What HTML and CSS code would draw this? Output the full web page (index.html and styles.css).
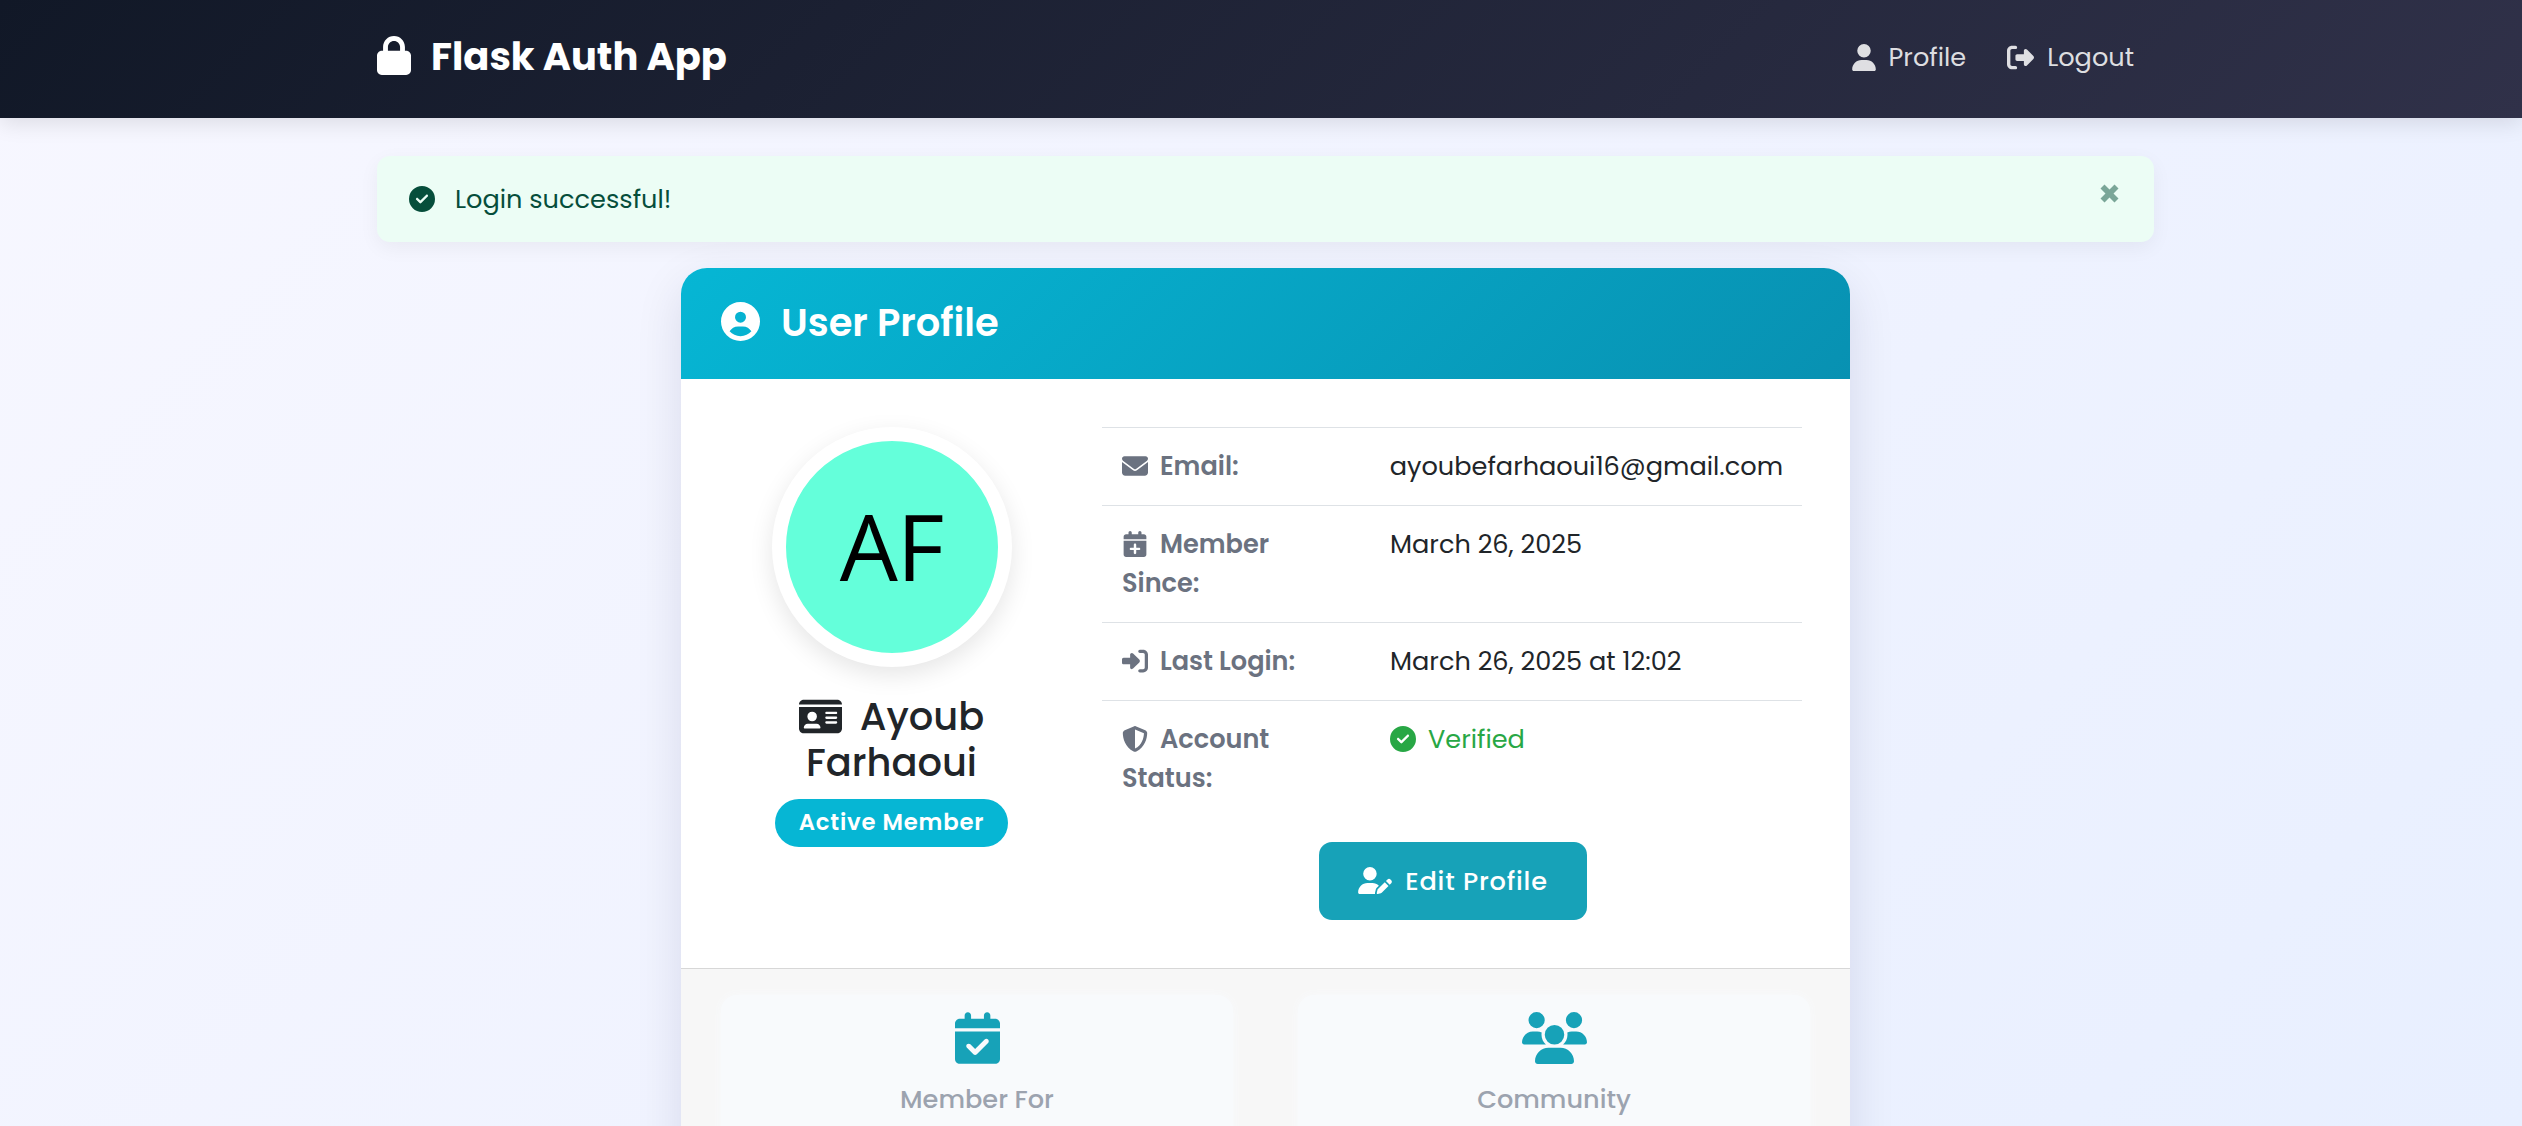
FILE: index.html
```html
<!DOCTYPE html>
<html lang="en">
<head>
<meta charset="utf-8">
<title>Flask Auth App</title>
<link rel="stylesheet" href="styles.css">
</head>
<body>
<header class="navbar">
  <div class="container navbar-inner">
    <a class="brand"><svg class="icon brand-icon" viewBox="0 0 448 512"><path d="M144 144v48H304V144c0-44.200-35.800-80-80-80s-80 35.800-80 80zM80 192V144C80 64.500 144.500 0 224 0s144 64.500 144 144v48h16c35.300 0 64 28.700 64 64V448c0 35.300-28.700 64-64 64H64c-35.300 0-64-28.700-64-64V256c0-35.300 28.700-64 64-64H80z"/></svg><span>Flask Auth App</span></a>
    <nav class="nav">
      <a class="nav-link"><svg class="icon nav-user" viewBox="0 0 448 512"><path d="M224 256A128 128 0 1 0 224 0a128 128 0 1 0 0 256zm-45.700 48C79.800 304 0 383.800 0 482.300C0 498.700 13.300 512 29.700 512H418.300c16.400 0 29.700-13.300 29.700-29.700C448 383.800 368.200 304 269.700 304H178.300z"/></svg><span>Profile</span></a>
      <a class="nav-link"><svg class="icon nav-out" viewBox="0 0 512 512"><path d="M377.900 105.900L500.700 228.700c7.200 7.200 11.300 17.100 11.300 27.300s-4.100 20.100-11.300 27.300L377.900 406.100c-6.400 6.400-15 9.900-24 9.900c-18.700 0-33.900-15.200-33.900-33.900l0-62.100-128 0c-17.700 0-32-14.300-32-32l0-64c0-17.700 14.300-32 32-32l128 0 0-62.100c0-18.700 15.200-33.900 33.900-33.900c9 0 17.600 3.600 24 9.900zM160 96L96 96c-17.700 0-32 14.300-32 32l0 256c0 17.700 14.300 32 32 32l64 0c17.700 0 32 14.300 32 32s-14.300 32-32 32l-64 0c-53 0-96-43-96-96L0 128C0 75 43 32 96 32l64 0c17.700 0 32 14.300 32 32s-14.300 32-32 32z"/></svg><span>Logout</span></a>
    </nav>
  </div>
</header>
<main class="container">
  <div class="alert">
    <svg class="icon alert-icon" viewBox="0 0 512 512"><path d="M256 512A256 256 0 1 0 256 0a256 256 0 1 0 0 512zM369 209L241 337c-9.400 9.400-24.600 9.400-33.900 0l-64-64c-9.400-9.400-9.400-24.600 0-33.900s24.600-9.400 33.900 0l47 47L335 175c9.400-9.400 24.600-9.400 33.900 0s9.400 24.600 0 33.900z"/></svg>
    <span>Login successful!</span>
    <svg class="alert-close" viewBox="0 0 19 19"><path d="M4.500 .5L9.500 5.500 14.500 .5 18.500 4.500 13.500 9.500 18.500 14.500 14.500 18.500 9.500 13.500 4.500 18.500 .5 14.500 5.500 9.500 .5 4.500z"/></svg>
  </div>
  <section class="card">
    <div class="card-header">
      <svg class="icon header-icon" viewBox="0 0 512 512"><path fill-rule="evenodd" d="M399 384.200C376.900 345.800 335.400 320 288 320H224c-47.400 0-88.900 25.800-111 64.200c35.200 39.200 86.200 63.800 143 63.800s107.800-24.700 143-63.800zM0 256a256 256 0 1 1 512 0A256 256 0 1 1 0 256zm256 16a72 72 0 1 0 0-144 72 72 0 1 0 0 144z"/></svg>
      <h1 class="header-title">User Profile</h1>
    </div>
    <div class="card-body">
      <div class="identity">
        <div class="avatar"><span class="avatar-text">AF</span></div>
        <h2 class="name"><span class="name-line"><svg class="icon name-icon" viewBox="0 0 576 512"><path fill-rule="evenodd" d="M0 96l576 0c0-35.300-28.700-64-64-64H64C28.700 32 0 60.700 0 96zm0 32V416c0 35.300 28.700 64 64 64H512c35.300 0 64-28.700 64-64V128H0zM64 405.300c0-29.500 23.900-53.300 53.300-53.300H234.700c29.500 0 53.300 23.900 53.300 53.300c0 5.900-4.800 10.700-10.700 10.700H74.700c-5.900 0-10.700-4.800-10.700-10.700zM176 192a64 64 0 1 1 0 128 64 64 0 1 1 0-128zm176 16c0-8.800 7.200-16 16-16H496c8.800 0 16 7.200 16 16s-7.200 16-16 16H368c-8.800 0-16-7.200-16-16zm0 64c0-8.800 7.200-16 16-16H496c8.800 0 16 7.200 16 16s-7.200 16-16 16H368c-8.800 0-16-7.200-16-16zm0 64c0-8.800 7.200-16 16-16H496c8.800 0 16 7.200 16 16s-7.200 16-16 16H368c-8.800 0-16-7.200-16-16z"/></svg><span>Ayoub</span></span><span>Farhaoui</span></h2>
        <span class="badge">Active Member</span>
      </div>
      <div class="details">
        <dl class="table">
          <div class="row">
            <dt><svg class="icon row-icon" viewBox="0 0 512 512"><path d="M48 64C21.500 64 0 85.500 0 112c0 15.100 7.100 29.300 19.200 38.400L236.800 313.600c11.400 8.500 27 8.500 38.400 0L492.800 150.400c12.100-9.100 19.200-23.300 19.200-38.400c0-26.500-21.500-48-48-48H48zM0 176V384c0 35.300 28.700 64 64 64H448c35.300 0 64-28.700 64-64V176L294.400 339.200c-22.800 17.100-54 17.100-76.800 0L0 176z"/></svg><span>Email:</span></dt>
            <dd>ayoubefarhaoui16@gmail.com</dd>
          </div>
          <div class="row row-tall">
            <dt><svg class="icon row-icon" viewBox="0 0 512 512"><path transform="translate(32 0)" fill-rule="evenodd" d="M96 32V64H48C21.500 64 0 85.500 0 112v48H448V112c0-26.500-21.500-48-48-48H352V32c0-17.700-14.300-32-32-32s-32 14.300-32 32V64H160V32c0-17.700-14.300-32-32-32S96 14.300 96 32zM448 192H0V464c0 26.500 21.500 48 48 48H400c26.500 0 48-21.500 48-48V192zM224 248c13.300 0 24 10.700 24 24v56h56c13.300 0 24 10.700 24 24s-10.700 24-24 24H248v56c0 13.300-10.700 24-24 24s-24-10.700-24-24V376H144c-13.300 0-24-10.700-24-24s10.700-24 24-24h56V272c0-13.300 10.700-24 24-24z"/></svg><span>Member</span><br><span>Since:</span></dt>
            <dd>March 26, 2025</dd>
          </div>
          <div class="row">
            <dt><svg class="icon row-icon" viewBox="0 0 512 512"><path d="M217.900 105.900L340.700 228.700c7.200 7.200 11.300 17.100 11.300 27.300s-4.100 20.100-11.300 27.300L217.900 406.100c-6.400 6.400-15 9.900-24 9.900c-18.700 0-33.900-15.200-33.900-33.900l0-62.100L32 320c-17.700 0-32-14.300-32-32l0-64c0-17.700 14.300-32 32-32l128 0 0-62.100c0-18.700 15.200-33.900 33.900-33.900c9 0 17.600 3.600 24 9.900zM352 416l64 0c17.700 0 32-14.300 32-32l0-256c0-17.700-14.300-32-32-32l-64 0c-17.700 0-32-14.300-32-32s14.300-32 32-32l64 0c53 0 96 43 96 96l0 256c0 53-43 96-96 96l-64 0c-17.700 0-32-14.300-32-32s14.300-32 32-32z"/></svg><span>Last Login:</span></dt>
            <dd>March 26, 2025 at 12:02</dd>
          </div>
          <div class="row row-tall">
            <dt><svg class="icon row-icon" viewBox="0 0 512 512"><path d="M256 0c4.600 0 9.200 1 13.400 2.900L457.700 82.800c22 9.300 38.400 31 38.300 57.200c-.5 99.200-41.300 280.700-213.600 363.200c-16.700 8-36.100 8-52.800 0C57.300 420.700 16.500 239.200 16 140c-.1-26.200 16.300-47.900 38.300-57.200L242.700 2.900C246.800 1 251.400 0 256 0zm0 66.800V444.800C394 378 431.100 230.100 432 141.400L256 66.800z"/></svg><span>Account</span><br><span>Status:</span></dt>
            <dd class="verified"><svg class="icon row-icon" viewBox="0 0 512 512"><path d="M256 512A256 256 0 1 0 256 0a256 256 0 1 0 0 512zM369 209L241 337c-9.400 9.400-24.600 9.400-33.900 0l-64-64c-9.400-9.400-9.400-24.600 0-33.900s24.600-9.400 33.900 0l47 47L335 175c9.400-9.400 24.600-9.400 33.900 0s9.400 24.600 0 33.900z"/></svg><span>Verified</span></dd>
          </div>
        </dl>
        <a class="button"><svg class="icon button-icon" viewBox="0 0 640 512"><path d="M224 256A128 128 0 1 0 224 0a128 128 0 1 0 0 256zm-45.700 48C79.800 304 0 383.800 0 482.300C0 498.700 13.300 512 29.700 512H322.800c-3.100-8.800-3.700-18.400-1.400-27.800l15-60.100c2.800-11.300 8.600-21.500 16.800-29.700l40.300-40.300c-32.100-31-75.700-50.100-123.900-50.100H178.300zm435.500-68.300c-15.600-15.600-40.900-15.600-56.600 0l-29.400 29.400 71 71 29.400-29.400c15.600-15.600 15.600-40.900 0-56.600l-14.400-14.400zM375.900 417c-4.100 4.100-7 9.200-8.400 14.900l-15 60.100c-1.400 5.500 .2 11.200 4.200 15.200s9.700 5.600 15.200 4.200l60.100-15c5.600-1.400 10.800-4.300 14.900-8.400L576.100 358.700l-71-71L375.900 417z"/></svg><span>Edit Profile</span></a>
      </div>
    </div>
    <div class="card-footer">
      <div class="stat">
        <svg class="icon stat-icon stat-calendar" viewBox="0 0 448 512"><path fill-rule="evenodd" d="M128 0c17.700 0 32 14.300 32 32V64H288V32c0-17.700 14.300-32 32-32s32 14.300 32 32V64h48c26.500 0 48 21.500 48 48v48H0V112C0 85.500 21.500 64 48 64H96V32c0-17.700 14.300-32 32-32zM0 192H448V464c0 26.500-21.500 48-48 48H48c-26.500 0-48-21.500-48-48V192zM329 305c9.400-9.400 9.400-24.600 0-33.900s-24.600-9.400-33.900 0l-95 95-47-47c-9.400-9.400-24.600-9.400-33.900 0s-9.400 24.600 0 33.900l64 64c9.400 9.400 24.600 9.400 33.900 0L329 305z"/></svg>
        <span>Member For</span>
      </div>
      <div class="stat">
        <svg class="icon stat-icon stat-people" viewBox="0 0 640 512"><path d="M144 0a80 80 0 1 1 0 160A80 80 0 1 1 144 0zM512 0a80 80 0 1 1 0 160A80 80 0 1 1 512 0zM0 298.700C0 239.800 47.800 192 106.700 192h42.700c15.900 0 31 3.500 44.600 9.700c-1.300 7.200-1.900 14.700-1.900 22.300c0 38.200 16.800 72.500 43.300 96c-.2 0-.4 0-.7 0H21.300C9.600 320 0 310.400 0 298.700zM405.300 320c-.2 0-.4 0-.7 0c26.600-23.500 43.300-57.800 43.300-96c0-7.600-.7-15-1.900-22.300c13.600-6.300 28.700-9.700 44.600-9.700h42.700C592.200 192 640 239.800 640 298.700c0 11.800-9.600 21.300-21.300 21.300H405.300zM224 224a96 96 0 1 1 192 0 96 96 0 1 1 -192 0zM128 485.300C128 411.700 187.700 352 261.300 352H378.700C452.300 352 512 411.700 512 485.300c0 14.700-11.900 26.700-26.700 26.700H154.700c-14.700 0-26.700-11.900-26.700-26.700z"/></svg>
        <span>Community</span>
      </div>
    </div>
  </section>
</main>
</body>
</html>
```
FILE: styles.css
```css
* { box-sizing: border-box; }
body { margin: 0; height: 1126px; overflow: hidden; font: 25.6px/39px Poppins, Inter, sans-serif; color: #212529; background: linear-gradient(135deg, #f7f7ff 0%, #f0f3ff 50%, #e8efff 100%); }
span, dd, a { white-space: nowrap; }
h1, h2, dl, dd { margin: 0; font-weight: inherit; }
.icon { fill: currentColor; flex: none; }
.container { width: 1777px; margin-left: 377px; }
.navbar { height: 118px; background: linear-gradient(135deg, #111827, #303149); box-shadow: 0 6px 20px rgba(0,0,0,.1); color: #fff; position: relative; }
.navbar-inner { height: 118px; display: flex; justify-content: space-between; align-items: center; padding: 0 20px 5px 0; }
.brand { display: flex; align-items: center; gap: 20px; font-size: 38.4px; font-weight: 700; }
.brand-icon { width: 34px; height: 39px; margin-bottom: 2px; }
.nav { display: flex; gap: 41px; color: rgba(255,255,255,.85); padding-top: 1px; }
.nav-link { display: flex; align-items: center; gap: 13px; }
.nav-user { width: 24px; height: 27px; }
.nav-out { width: 27px; height: 27px; }
.alert { margin-top: 38px; height: 86px; border-radius: 13px; background: #ecfdf5; color: #064e3b; display: flex; align-items: center; padding: 0 35px 0 32px; box-shadow: 0 6px 20px rgba(0,0,0,.05); }
.alert-icon { width: 26px; height: 26px; margin-right: 20px; }
.alert-close { width: 19px; height: 19px; margin: 0 0 11px auto; fill: #7aa698; }
.card { width: 1169px; margin: 26px 0 0 304px; background: #fff; border-radius: 26px; overflow: hidden; box-shadow: 0 16px 48px rgba(20,20,60,.11); }
.card-header { height: 111px; padding: 0 40px 3px; display: flex; align-items: center; gap: 21px; color: #fff; background: linear-gradient(135deg, #06b6d4, #0891b2); }
.header-icon { width: 39px; height: 39px; margin-bottom: 2px; }
.header-title { font-size: 38.4px; font-weight: 600; padding-top: 1px; }
.card-body { height: 589px; padding: 48px 48px 0 40px; display: flex; justify-content: space-between; }
.identity { width: 341px; display: flex; flex-direction: column; align-items: center; }
.avatar { width: 240px; height: 240px; border: 14px solid #fff; border-radius: 50%; background: #64ffda; box-shadow: 0 8px 24px rgba(0,0,0,.1); display: flex; align-items: center; justify-content: center; }
.avatar-text { font: 92px/1 "Open Sans", sans-serif; letter-spacing: -1px; color: #000; padding-bottom: 2px; }
.name { margin-top: 27px; font-size: 38.4px; line-height: 46px; font-weight: 500; text-align: center; display: flex; flex-direction: column; align-items: center; }
.name-line { display: flex; align-items: center; gap: 18px; }
.name-icon { width: 43px; height: 39px; margin-bottom: 2px; }
.badge { margin-top: 13px; width: 233px; height: 48px; border-radius: 24px; background: #06b6d4; color: #fff; font-size: 22.75px; line-height: 46px; letter-spacing: .8px; font-weight: 600; text-align: center; }
.details { width: 700px; display: flex; flex-direction: column; align-items: center; }
.table { width: 700px; }
.row { height: 78px; border-top: 1px solid #dee2e6; display: flex; padding: 19px 19px 0 20px; }
.row-tall { height: 117px; }
.row dt { width: 268px; color: #6b7280; font-weight: 600; }
.row-icon { width: 26px; height: 26px; margin-right: 12px; vertical-align: -4px; }
.verified { color: #28a745; }
.button { margin: 25px 0 0 2px; width: 268px; height: 78px; border-radius: 13px; background: #17a2b8; color: #fff; font-weight: 500; letter-spacing: .8px; display: flex; align-items: center; justify-content: center; gap: 13px; }
.button-icon { width: 34px; height: 27px; margin-bottom: 2px; }
.card-footer { height: 300px; border-top: 1px solid #d7d7d7; background: #f7f7f7; display: flex; justify-content: space-between; padding: 26px 40px 0; }
.stat { width: 512px; height: 240px; border-radius: 16px; background: #f8fafc; box-shadow: 0 0 10px #f8fafc; display: flex; flex-direction: column; align-items: center; padding-top: 17px; color: #9ca3af; font-weight: 500; }
.stat-icon { height: 52px; color: #17a2b8; margin-bottom: 16px; }
.stat-calendar { width: 45px; }
.stat-people { width: 65px; }
```
